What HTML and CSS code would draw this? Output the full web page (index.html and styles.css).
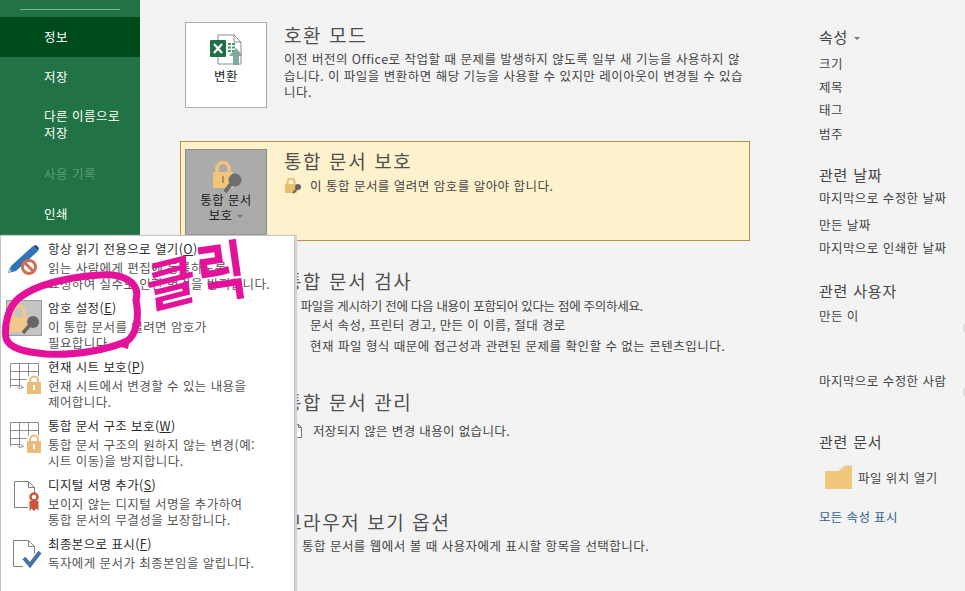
FILE: index.html
```html
<!DOCTYPE html>
<html lang="ko">
<head>
    <meta charset="UTF-8">
    <title>정보</title>
    <link rel="stylesheet" href="styles.css">
</head>
<body>
    <div class="backstage">
        <nav class="sidebar">
            <div class="side-rule"></div>
            <a class="side-item active">정보</a>
            <a class="side-item raised">저장</a>
            <a class="side-item tall">다른 이름으로 저장</a>
            <a class="side-item disabled">사용 기록</a>
            <a class="side-item">인쇄</a>
        </nav>

        <main class="content">
            <section class="section first">
                <div class="action">
                    <svg class="action-icon" width="32" height="32" viewBox="0 0 32 32">
                        <path d="M8 1h16l7 7v22H8z" fill="#fff" stroke="#8a8a8a"/>
                        <path d="M24 1v7h7" fill="none" stroke="#8a8a8a"/>
                        <rect x="0" y="6" width="16" height="17" rx="1" fill="#1e7145"/>
                        <path d="M4 10l8 9M12 10l-8 9" stroke="#fff" stroke-width="2.2"/>
                        <path d="M18 10h7M18 13.500h7M18 17h7" stroke="#3f9d6c" stroke-width="2" stroke-dasharray="3 1"/>
                        <path d="M26 14l7 8h-4v9h-6v-9h-4z" fill="#7fa99b"/>
                    </svg>
                    <span class="action-label">변환</span>
                </div>
                <div class="section-body">
                    <h2>호환 모드</h2>
                    <p class="wide">이전 버전의 Office로 작업할 때 문제를 발생하지 않도록 일부 새 기능을 사용하지 않<br>습니다. 이 파일을 변환하면 해당 기능을 사용할 수 있지만 레이아웃이 변경될 수 있습<br>니다.</p>
                </div>
            </section>

            <section class="section warn">
                <div class="action pressed">
                    <svg class="action-icon" width="32" height="32" viewBox="0 0 32 32">
                        <path d="M7 12V7.500a6 6 0 0 1 12 0V12" fill="none" stroke="#f0c578" stroke-width="3.500"/>
                        <rect x="3" y="11" width="20" height="16" rx="1.500" fill="#f0c578"/>
                        <path d="M13 15v7" stroke="#a89060" stroke-width="2"/>
                        <path d="M21 23l-6 8" stroke="#6e6e6e" stroke-width="4"/>
                        <circle cx="25" cy="19" r="6.500" fill="#6e6e6e"/>
                    </svg>
                    <span class="action-label">통합 문서<br>보호 <i class="caret"></i></span>
                </div>
                <div class="section-body">
                    <h2>통합 문서 보호</h2>
                    <p class="with-icon wide">
                        <svg width="18" height="16" viewBox="0 0 18 16">
                            <path d="M3.500 7V4a3.500 3.500 0 0 1 7 0v3" fill="none" stroke="#e9bd6e" stroke-width="2"/>
                            <rect x="1" y="6" width="12" height="9" rx="1" fill="#e9bd6e"/>
                            <path d="M13 11l-4 4" stroke="#666" stroke-width="2"/>
                            <circle cx="14" cy="9" r="3" fill="#666"/>
                        </svg>
                        <span>이 통합 문서를 열려면 암호를 알아야 합니다.</span>
                    </p>
                </div>
            </section>

            <section class="section inspect">
                <div class="action-gap"></div>
                <div class="section-body">
                    <h2>통합 문서 검사</h2>
                    <p class="lead tight">이 파일을 게시하기 전에 다음 내용이 포함되어 있다는 점에 주의하세요.</p>
                    <ul>
                        <li>문서 속성, 프린터 경고, 만든 이 이름, 절대 경로</li>
                        <li class="wide">현재 파일 형식 때문에 접근성과 관련된 문제를 확인할 수 없는 콘텐츠입니다.</li>
                    </ul>
                </div>
            </section>

            <section class="section">
                <div class="action-gap"></div>
                <div class="section-body">
                    <h2>통합 문서 관리</h2>
                    <p class="with-icon doc-note">
                        <svg width="10" height="14" viewBox="0 0 10 14">
                            <path d="M.5.500h6l3 3v10h-9z M6.500.500v3h3" fill="#fff" stroke="#777"/>
                        </svg>
                        <span>저장되지 않은 변경 내용이 없습니다.</span>
                    </p>
                </div>
            </section>

            <section class="section">
                <div class="action-gap"></div>
                <div class="section-body">
                    <h2>브라우저 보기 옵션</h2>
                    <p class="lead near wide">이 통합 문서를 웹에서 볼 때 사용자에게 표시할 항목을 선택합니다.</p>
                </div>
            </section>
        </main>

        <aside class="props">
            <h3 class="props-top">속성 <i class="caret"></i></h3>
            <p>크기</p>
            <p>제목</p>
            <p>태그</p>
            <p>범주</p>

            <h3 class="props-dates">관련 날짜</h3>
            <p>마지막으로 수정한 날짜</p>
            <p class="row-gap">만든 날짜</p>
            <p>마지막으로 인쇄한 날짜</p>

            <h3 class="props-people">관련 사용자</h3>
            <p>만든 이</p>
            <div class="avatar"></div>
            <p class="last-author">마지막으로 수정한 사람</p>
            <div class="avatar"></div>

            <h3 class="props-docs">관련 문서</h3>
            <div class="folder-row">
                <svg width="28" height="25" viewBox="0 0 28 25">
                    <path d="M0 6h14l6-5h7v23H0z" fill="#f0c87c"/>
                    <path d="M14 5l6-4.500h7" fill="none" stroke="#d9d9d9"/>
                </svg>
                <span>파일 위치 열기</span>
            </div>
            <a class="show-all">모든 속성 표시</a>
        </aside>
    </div>

    <div class="menu">
        <div class="menu-item">
            <svg class="menu-icon" width="36" height="36" viewBox="0 0 36 36">
                <path d="M2 29l3-7L27 2l5 5L10 27z" fill="#2f75b5"/>
                <path d="M27 2l3-1 3 3-1 3z" fill="#1f4e79"/>
                <path d="M2 29l1-5 3 3z" fill="#9cc2e5"/>
                <circle cx="23" cy="23" r="6.500" fill="#fff" stroke="#cf6f50" stroke-width="3"/>
                <path d="M18.500 18.500l9 9" stroke="#cf6f50" stroke-width="3"/>
            </svg>
            <div class="menu-text">
                <strong>항상 읽기 전용으로 열기(<u>O</u>)</strong>
                <span>읽는 사람에게 편집에 동록하도록<br>요청하여 실수로 인한 변경을 방지합니다.</span>
            </div>
        </div>
        <div class="menu-item">
            <svg class="menu-icon icon-selected" width="36" height="36" viewBox="0 0 36 36">
                <rect x=".5" y=".5" width="35" height="35" fill="#c4c4c4" stroke="#9a9a9a"/>
                <path d="M6.500 18v-6a6 6 0 0 1 12 0v6" fill="none" stroke="#f0c98a" stroke-width="3.500"/>
                <rect x="3" y="17" width="19" height="15" rx="1.500" fill="#f0c98a"/>
                <path d="M23 26l-6 7" stroke="#666" stroke-width="3.500"/>
                <circle cx="27" cy="22" r="6" fill="#666"/>
            </svg>
            <div class="menu-text">
                <strong>암호 설정(<u>E</u>)</strong>
                <span>이 통합 문서를 열려면 암호가<br>필요합니다.</span>
            </div>
        </div>
        <div class="menu-item">
            <svg class="menu-icon" width="36" height="36" viewBox="0 0 36 36">
                <path d="M4.500 1.500h28v13M4.500 25.500v-24M4.500 9.500h28M4.500 17.500h16M13.500 1.500v24M22.500 1.500v13M4.500 23.500h10l3 2-4 1-2-1.500" fill="none" stroke="#8c8c8c"/>
                <path d="M24 21v-2.500a4 4 0 0 1 8 0V21" fill="none" stroke="#e9bd78" stroke-width="2"/>
                <rect x="21" y="20" width="14" height="12" rx="1" fill="#e9bd78"/>
                <path d="M28 23v5" stroke="#fff" stroke-width="2"/>
            </svg>
            <div class="menu-text">
                <strong>현재 시트 보호(<u>P</u>)</strong>
                <span>현재 시트에서 변경할 수 있는 내용을<br>제어합니다.</span>
            </div>
        </div>
        <div class="menu-item">
            <svg class="menu-icon" width="36" height="36" viewBox="0 0 36 36">
                <path d="M4.500 1.500h28v13M4.500 25.500v-24M4.500 9.500h28M4.500 17.500h16M13.500 1.500v24M22.500 1.500v13M4.500 23.500h10l3 2-4 1-2-1.500" fill="none" stroke="#8c8c8c"/>
                <path d="M24 21v-2.500a4 4 0 0 1 8 0V21" fill="none" stroke="#e9bd78" stroke-width="2"/>
                <rect x="21" y="20" width="14" height="12" rx="1" fill="#e9bd78"/>
                <path d="M28 23v5" stroke="#fff" stroke-width="2"/>
            </svg>
            <div class="menu-text">
                <strong>통합 문서 구조 보호(<u>W</u>)</strong>
                <span>통합 문서 구조의 원하지 않는 변경(예:<br>시트 이동)을 방지합니다.</span>
            </div>
        </div>
        <div class="menu-item">
            <svg class="menu-icon" width="36" height="36" viewBox="0 0 36 36">
                <path d="M8.500 1.500h14l6 6v6M22.500 1.500v6h6M22 27.500H8.500v-26" fill="none" stroke="#808080"/>
                <circle cx="28" cy="17" r="3.500" fill="#fff" stroke="#c9553a" stroke-width="2.500"/>
                <path d="M23.500 21h9v10l-2-2.500-2.500 2.500-2.500-2.500-2 2.500z" fill="#c9553a"/>
            </svg>
            <div class="menu-text">
                <strong>디지털 서명 추가(<u>S</u>)</strong>
                <span>보이지 않는 디지털 서명을 추가하여<br>통합 문서의 무결성을 보장합니다.</span>
            </div>
        </div>
        <div class="menu-item">
            <svg class="menu-icon" width="36" height="36" viewBox="0 0 36 36">
                <path d="M7.500 1.500h15l6 6v7M22.500 1.500v6h6M17 27.500H7.500v-26" fill="none" stroke="#808080"/>
                <path d="M18 19l6 7 10-13" fill="none" stroke="#3f74ad" stroke-width="4"/>
            </svg>
            <div class="menu-text">
                <strong>최종본으로 표시(<u>F</u>)</strong>
                <span>독자에게 문서가 최종본임을 알립니다.</span>
            </div>
        </div>
    </div>

    <!-- pink marker scribbled over the screenshot -->
    <svg class="ring" width="150" height="100" viewBox="0 0 150 100">
        <path d="M136 30C141 12 122 3 100 5C70 7 36 14 19 28C8 37 4 55 6 68C9 79 26 82 46 84C76 86 110 79 127 71C135 66 140 50 136 30" fill="none" stroke="#e4129a" stroke-width="7" stroke-linecap="round"/>
        <path d="M118 76l10 3 2-10z" fill="#e4129a"/>
    </svg>
    <div class="scribble"><span>클</span><span>릭</span></div>
</body>
</html>
```

FILE: styles.css
```css
* {
    box-sizing: border-box;
}
html, body {
    margin: 0;
    height: 100%;
    overflow: hidden;
}
body {
    position: relative;
    font-family: "Noto Sans CJK KR", "Noto Sans", sans-serif;
    font-size: 12.5px;
    background-color: #f3f3f3;
    color: #444;
}
.backstage {
    display: flex;
    height: 591px;
}

/* left green rail */
.sidebar {
    width: 140px;
    flex: none;
    padding-top: 9px;
    background: #217346;
    color: #fff;
}
.side-rule {
    width: 100px;
    height: 1px;
    margin: 0 0 7px 20px;
    background: #7fb094;
}
.side-item {
    display: flex;
    align-items: center;
    height: 40px;
    padding: 0 20px 0 44px;
    letter-spacing: 0.5px;
    line-height: 17px;
}
.side-item.active {
    padding-bottom: 2px;
    background: #004b1c;
}
.side-item.raised {
    padding-bottom: 2px;
}
.side-item.tall {
    height: 56px;
    padding-bottom: 2px;
}
.side-item.disabled {
    color: #5c9c78;
}

/* middle column */
.content {
    flex: none;
    width: 660px;
    padding: 14px 0 0 40px;
}
.section {
    display: flex;
    gap: 17px;
    width: 570px;
    height: 102px;
    margin-bottom: 18px;
    padding: 7px 4px;
    border: 1px solid transparent;
}
.section.first {
    margin-bottom: 25px;
}
.section.warn {
    height: 100px;
    margin-bottom: 19px;
    border-color: #b8923f;
    background: #fef2cd;
}
.section.inspect {
    margin-bottom: 19px;
}
.action {
    display: flex;
    flex: none;
    flex-direction: column;
    align-items: center;
    width: 82px;
    height: 86px;
    padding-top: 11px;
    border: 1px solid #ababab;
    background: #fff;
}
.action.pressed {
    border-color: #8a8a8a;
    background: #ababab;
}
.pressed .action-label {
    margin-top: -1px;
}
.action-gap {
    flex: none;
    width: 82px;
}
.action-label {
    margin-top: 2px;
    letter-spacing: 0.4px;
    line-height: 15px;
    text-align: center;
    color: #1a1a1a;
}
.caret {
    display: inline-block;
    margin-left: 1px;
    vertical-align: middle;
    border-top: 3px solid #777;
    border-left: 3px solid transparent;
    border-right: 3px solid transparent;
}
.section-body {
    flex: 1;
    min-width: 0;
    white-space: nowrap;
}
.section-body h2 {
    margin: 0;
    font-size: 19px;
    font-weight: 400;
    letter-spacing: 1.6px;
    line-height: 25px;
    color: #505050;
}
.warn .section-body h2 {
    margin-top: -1px;
}
.section-body p {
    margin: 4px 0 0;
    line-height: 16.500px;
    letter-spacing: 0.35px;
}
.section-body .with-icon {
    display: flex;
    align-items: center;
    gap: 8px;
    margin-top: 5px;
}
.section-body .lead {
    margin-top: 5px;
    padding-left: 2px;
}
.section-body .near {
    margin-top: 4px;
}
.section-body .wide {
    letter-spacing: 0.48px;
}
.section-body .tight {
    letter-spacing: -0.3px;
}
.section-body ul {
    margin: 2px 0 0;
    padding: 0 0 0 26px;
    list-style: none;
    letter-spacing: 0.35px;
}
.section-body li {
    margin-bottom: 5px;
    line-height: 16px;
}
.section-body .doc-note {
    gap: 11px;
    margin-top: 9px;
    padding-left: 8px;
}

/* right column */
.props {
    flex: none;
    width: 165px;
    padding: 27px 0 0 19px;
}
.props h3 {
    margin: 0;
    font-size: 15px;
    font-weight: 400;
    letter-spacing: 0.8px;
    line-height: 20px;
}
.props p {
    margin: 0;
    height: 23.200px;
    line-height: 23.200px;
    white-space: nowrap;
    letter-spacing: 0.45px;
}
.props .props-top {
    margin-bottom: 5px;
}
.props .props-dates {
    margin: 20px 0 1px;
}
.props .row-gap {
    margin-top: 4px;
}
.props .props-people {
    margin: 22px 0 3px;
}
.avatar {
    width: 24px;
    height: 18px;
    margin: -9px 0 0 144px;
    border-radius: 50%;
    background: #dcdcdc;
}
.props .last-author {
    margin-top: 32px;
}
.props .props-docs {
    margin-top: 31px;
}
.folder-row {
    display: flex;
    align-items: center;
    gap: 5px;
    margin: 13px 0 0 6px;
    letter-spacing: 0.45px;
}
.show-all {
    display: block;
    margin-top: 18px;
    letter-spacing: 0.35px;
    line-height: 17px;
    color: #2f6194;
}

/* popup menu */
.menu {
    position: absolute;
    left: 0;
    top: 235px;
    width: 295px;
    height: 360px;
    padding-top: 4px;
    border: 1px solid #c6c6c6;
    background: #fff;
    box-shadow: 2px 0 1px #d4d4d4;
}
.menu-item {
    position: relative;
    display: flex;
    height: 59px;
    padding: 0 4px 0 47px;
}
.menu-icon {
    position: absolute;
    left: 5px;
    top: 4px;
}
.menu-icon.icon-selected {
    top: 1px;
}
.menu-text strong {
    display: block;
    font-weight: 400;
    letter-spacing: 0.4px;
    line-height: 18px;
    color: #2b2b2b;
}
.menu-text span {
    display: block;
    padding-top: 2px;
    line-height: 15.500px;
    letter-spacing: 0.42px;
    color: #555;
}

/* marker on top of everything */
.ring {
    position: absolute;
    left: 0;
    top: 270px;
}
.scribble {
    position: absolute;
    left: 146px;
    top: 236px;
    display: flex;
    font-size: 54px;
    font-weight: 700;
    line-height: 70px;
    color: #e4129a;
}
.scribble span:first-child {
    transform: translateY(9px) rotate(-14deg) skewX(-8deg);
}
.scribble span:last-child {
    transform: translateY(-3px) rotate(-8deg) scaleY(1.2);
}
```
